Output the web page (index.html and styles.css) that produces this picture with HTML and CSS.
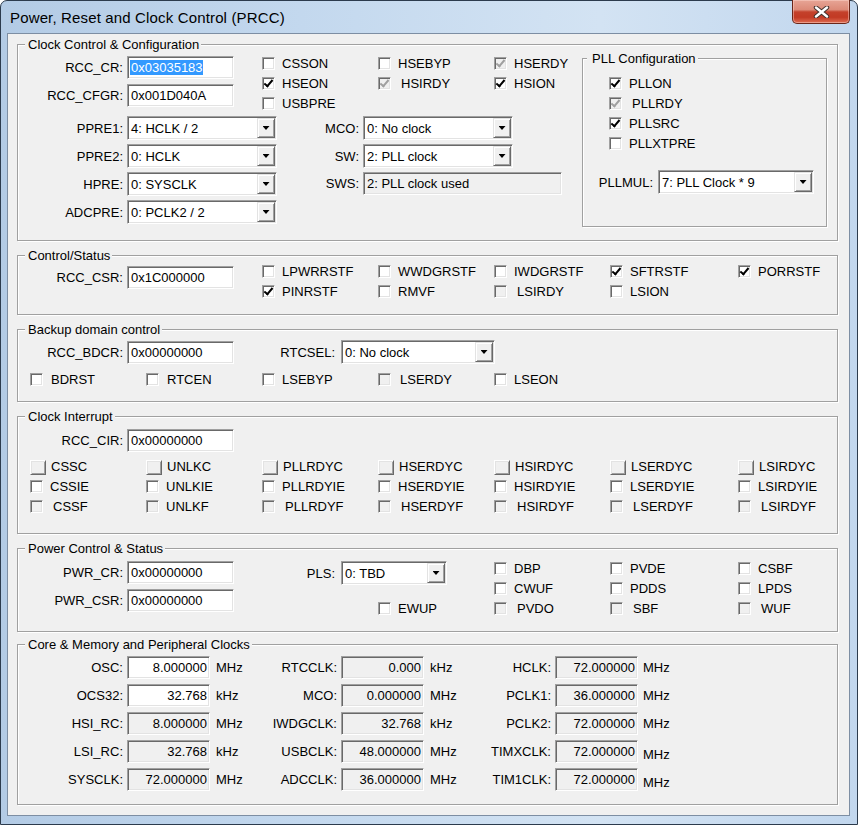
FILE: index.html
```html
<!DOCTYPE html>
<html>
<head>
<meta charset="utf-8">
<title>Power, Reset and Clock Control (PRCC)</title>
<link rel="stylesheet" href="styles.css">
</head>
<body>
<div class="window">
  <div class="titlebar">
    <span class="title">Power, Reset and Clock Control (PRCC)</span>
    <div class="close">
      <svg width="17" height="12" viewBox="0 0 17 12"><path d="M3 1.5 L14 10.5 M14 1.5 L3 10.5" stroke="#40302c" stroke-width="4.4" stroke-linecap="round"/><path d="M3 1.5 L14 10.5 M14 1.5 L3 10.5" stroke="#fff" stroke-width="2.4" stroke-linecap="round"/></svg>
    </div>
  </div>
  <div class="client">

    <div class="grp g1">
      <span class="legend">Clock Control &amp; Configuration</span>
      <div class="g1-left">
        <div class="g1-top">
          <div class="stack">
            <div class="fld"><span class="lbl l105">RCC_CR:</span><span class="edit w107"><span class="sel">0x03035183</span></span></div>
            <div class="fld"><span class="lbl l105">RCC_CFGR:</span><span class="edit w107">0x001D040A</span></div>
          </div>
          <div class="cbgrid c3 g1-cbs">
            <div class="cb"><span class="box"></span>CSSON</div>
            <div class="cb"><span class="box"></span>HSEBYP</div>
            <div class="cb"><span class="box dis on"></span>HSERDY</div>
            <div class="cb"><span class="box on"></span>HSEON</div>
            <div class="cb"><span class="box dis on sh"></span>HSIRDY</div>
            <div class="cb"><span class="box on"></span>HSION</div>
            <div class="cb"><span class="box"></span>USBPRE</div>
          </div>
        </div>
        <div class="g1-bot">
          <div class="stack s4">
            <div class="fld"><span class="lbl l105">PPRE1:</span><span class="combo w150"><span class="txt">4: HCLK / 2</span><span class="btn"></span></span></div>
            <div class="fld"><span class="lbl l105">PPRE2:</span><span class="combo w150"><span class="txt">0: HCLK</span><span class="btn"></span></span></div>
            <div class="fld"><span class="lbl l105">HPRE:</span><span class="combo w150"><span class="txt">0: SYSCLK</span><span class="btn"></span></span></div>
            <div class="fld"><span class="lbl l105">ADCPRE:</span><span class="combo w150"><span class="txt">0: PCLK2 / 2</span><span class="btn"></span></span></div>
          </div>
          <div class="stack s4">
            <div class="fld"><span class="lbl l82">MCO:</span><span class="combo w150"><span class="txt">0: No clock</span><span class="btn"></span></span></div>
            <div class="fld"><span class="lbl l82">SW:</span><span class="combo w150"><span class="txt">2: PLL clock</span><span class="btn"></span></span></div>
            <div class="fld"><span class="lbl l82">SWS:</span><span class="edit ro w199">2: PLL clock used</span></div>
          </div>
        </div>
      </div>
      <div class="grp pll">
        <span class="legend lg-pll">PLL Configuration</span>
        <div class="cbgrid c1">
          <div class="cb"><span class="box on"></span>PLLON</div>
          <div class="cb"><span class="box dis on sh"></span>PLLRDY</div>
          <div class="cb"><span class="box on"></span>PLLSRC</div>
          <div class="cb"><span class="box"></span>PLLXTPRE</div>
        </div>
        <div class="fld pllmul"><span class="lbl l70 gap5">PLLMUL:</span><span class="combo w156"><span class="txt">7: PLL Clock * 9</span><span class="btn"></span></span></div>
      </div>
    </div>

    <div class="grp g2">
      <span class="legend">Control/Status</span>
      <div class="fld"><span class="lbl l105">RCC_CSR:</span><span class="edit w107">0x1C000000</span></div>
      <div class="cbgrid c5 g2-cbs">
        <div class="cb"><span class="box"></span>LPWRRSTF</div>
        <div class="cb"><span class="box"></span>WWDGRSTF</div>
        <div class="cb"><span class="box"></span>IWDGRSTF</div>
        <div class="cb"><span class="box on"></span>SFTRSTF</div>
        <div class="cb"><span class="box on"></span>PORRSTF</div>
        <div class="cb"><span class="box on"></span>PINRSTF</div>
        <div class="cb"><span class="box"></span>RMVF</div>
        <div class="cb"><span class="box dis sh"></span>LSIRDY</div>
        <div class="cb"><span class="box"></span>LSION</div>
      </div>
    </div>

    <div class="grp g3">
      <span class="legend">Backup domain control</span>
      <div class="row">
        <div class="fld"><span class="lbl l105">RCC_BDCR:</span><span class="edit w107">0x00000000</span></div>
        <div class="fld"><span class="lbl l101 gap6">RTCSEL:</span><span class="combo w154"><span class="txt">0: No clock</span><span class="btn"></span></span></div>
      </div>
      <div class="cbgrid c5b g3-cbs">
        <div class="cb"><span class="box m8"></span>BDRST</div>
        <div class="cb"><span class="box m8"></span>RTCEN</div>
        <div class="cb"><span class="box"></span>LSEBYP</div>
        <div class="cb"><span class="box dis sh2"></span>LSERDY</div>
        <div class="cb"><span class="box"></span>LSEON</div>
      </div>
    </div>

    <div class="grp g4">
      <span class="legend">Clock Interrupt</span>
      <div class="fld"><span class="lbl l105">RCC_CIR:</span><span class="edit w107">0x00000000</span></div>
      <div class="cbgrid c7 g4-cbs">
        <div class="cb"><span class="box up"></span>CSSC</div>
        <div class="cb"><span class="box up"></span>UNLKC</div>
        <div class="cb"><span class="box up"></span>PLLRDYC</div>
        <div class="cb"><span class="box up"></span>HSERDYC</div>
        <div class="cb"><span class="box up"></span>HSIRDYC</div>
        <div class="cb"><span class="box up"></span>LSERDYC</div>
        <div class="cb"><span class="box up"></span>LSIRDYC</div>
        <div class="cb"><span class="box"></span>CSSIE</div>
        <div class="cb"><span class="box"></span>UNLKIE</div>
        <div class="cb"><span class="box"></span>PLLRDYIE</div>
        <div class="cb"><span class="box"></span>HSERDYIE</div>
        <div class="cb"><span class="box"></span>HSIRDYIE</div>
        <div class="cb"><span class="box"></span>LSERDYIE</div>
        <div class="cb"><span class="box"></span>LSIRDYIE</div>
        <div class="cb"><span class="box dis sh"></span>CSSF</div>
        <div class="cb"><span class="box dis"></span>UNLKF</div>
        <div class="cb"><span class="box dis sh"></span>PLLRDYF</div>
        <div class="cb"><span class="box dis sh"></span>HSERDYF</div>
        <div class="cb"><span class="box dis sh"></span>HSIRDYF</div>
        <div class="cb"><span class="box dis sh"></span>LSERDYF</div>
        <div class="cb"><span class="box dis sh"></span>LSIRDYF</div>
      </div>
    </div>

    <div class="grp g5">
      <span class="legend">Power Control &amp; Status</span>
      <div class="stack">
        <div class="fld"><span class="lbl l105">PWR_CR:</span><span class="edit w107">0x00000000</span></div>
        <div class="fld"><span class="lbl l105">PWR_CSR:</span><span class="edit w107">0x00000000</span></div>
      </div>
      <div class="g5-mid">
        <div class="fld"><span class="lbl l101 gap6">PLS:</span><span class="combo w106"><span class="txt">0: TBD</span><span class="btn"></span></span></div>
        <div class="cb ewup"><span class="box"></span>EWUP</div>
      </div>
      <div class="cbgrid c3b g5-cbs">
        <div class="cb"><span class="box"></span>DBP</div>
        <div class="cb"><span class="box"></span>PVDE</div>
        <div class="cb"><span class="box"></span>CSBF</div>
        <div class="cb"><span class="box"></span>CWUF</div>
        <div class="cb"><span class="box"></span>PDDS</div>
        <div class="cb"><span class="box"></span>LPDS</div>
        <div class="cb"><span class="box dis sh"></span>PVDO</div>
        <div class="cb"><span class="box dis sh"></span>SBF</div>
        <div class="cb"><span class="box dis sh"></span>WUF</div>
      </div>
    </div>

    <div class="grp g6">
      <span class="legend">Core &amp; Memory and Peripheral Clocks</span>
      <div class="stack clk1">
        <div class="fld"><span class="lbl l105">OSC:</span><span class="edit num w83">8.000000</span><span class="unit">MHz</span></div>
        <div class="fld"><span class="lbl l105">OCS32:</span><span class="edit num w83">32.768</span><span class="unit">kHz</span></div>
        <div class="fld"><span class="lbl l105">HSI_RC:</span><span class="edit num ro w83">8.000000</span><span class="unit">MHz</span></div>
        <div class="fld"><span class="lbl l105">LSI_RC:</span><span class="edit num ro w83">32.768</span><span class="unit">kHz</span></div>
        <div class="fld"><span class="lbl l105">SYSCLK:</span><span class="edit num ro w83">72.000000</span><span class="unit">MHz</span></div>
      </div>
      <div class="stack clk2">
        <div class="fld"><span class="lbl l87">RTCCLK:</span><span class="edit num ro w83">0.000</span><span class="unit">kHz</span></div>
        <div class="fld"><span class="lbl l87">MCO:</span><span class="edit num ro w83">0.000000</span><span class="unit">MHz</span></div>
        <div class="fld"><span class="lbl l87">IWDGCLK:</span><span class="edit num ro w83">32.768</span><span class="unit">kHz</span></div>
        <div class="fld"><span class="lbl l87">USBCLK:</span><span class="edit num ro w83">48.000000</span><span class="unit">MHz</span></div>
        <div class="fld"><span class="lbl l87">ADCCLK:</span><span class="edit num ro w83">36.000000</span><span class="unit">MHz</span></div>
      </div>
      <div class="stack clk3">
        <div class="fld"><span class="lbl l87">HCLK:</span><span class="edit num ro w83">72.000000</span><span class="unit u5">MHz</span></div>
        <div class="fld"><span class="lbl l87">PCLK1:</span><span class="edit num ro w83">36.000000</span><span class="unit u5">MHz</span></div>
        <div class="fld"><span class="lbl l87">PCLK2:</span><span class="edit num ro w83">72.000000</span><span class="unit u5">MHz</span></div>
        <div class="fld"><span class="lbl l87">TIMXCLK:</span><span class="edit num ro w83">72.000000</span><span class="unit u5 low">MHz</span></div>
        <div class="fld"><span class="lbl l87">TIM1CLK:</span><span class="edit num ro w83">72.000000</span><span class="unit u5 low">MHz</span></div>
      </div>
    </div>

  </div>
</div>
</body>
</html>
```
FILE: styles.css
```css
* { box-sizing: border-box; }
html, body { margin: 0; padding: 0; }
body {
  width: 858px; height: 825px; overflow: hidden; background: #fff;
  font-family: "Liberation Sans", Arial, sans-serif; font-size: 13px; line-height: 15px; color: #000;
}
.window {
  width: 858px; height: 825px;
  display: flex; flex-direction: column;
  padding: 0 7px 8px 6px;
  border: 1px solid #2c3b4d; border-radius: 7px 7px 0 0;
  background: linear-gradient(90deg, #b3cbe5 0%, #c3d8ee 35%, #d3e3f3 70%, #c2d7ee 100%);
}
.titlebar { height: 32px; flex: none; display: flex; align-items: flex-start; padding-left: 3px; }
.title { font-size: 15px; line-height: 18px; margin-top: 8px; letter-spacing: 0.15px; white-space: nowrap; }
.close {
  margin-left: auto; margin-top: -1px; width: 58px; height: 24px;
  border: 1px solid #6a2619; border-top: none; border-radius: 0 0 5px 5px;
  background: linear-gradient(#e7a596 0%, #dc8a78 42%, #c4412b 52%, #c23a24 75%, #de6c52 100%);
  box-shadow: inset 0 0 0 1px rgba(255, 220, 210, 0.45);
  display: flex; align-items: center; justify-content: center;
}
.client {
  flex: 1; background: #f0f0f0; border: 1px solid #7d8ea3;
  display: flex; flex-direction: column; gap: 14px;
  padding: 10px 11px 0 9px;
}

/* group boxes */
.grp {
  position: relative; flex: none;
  border: 1px solid #a0a0a0;
  box-shadow: inset 1px 1px 0 #fff, 1px 1px 0 #fff;
}
.legend {
  position: absolute; left: 7px; top: -8px;
  padding: 0 2px 0 3px; background: #f0f0f0; white-space: nowrap;
}
.g1 { height: 197px; display: flex; align-items: flex-start; padding-top: 11px; }
.g2 { height: 60px; display: flex; align-items: flex-start; padding-top: 10px; }
.g3 { height: 73px; padding-top: 10px; }
.g4 { height: 118px; padding-top: 12px; }
.g5 { height: 84px; display: flex; align-items: flex-start; padding-top: 12px; }
.g6 { height: 161px; display: flex; align-items: flex-start; padding-top: 11px; margin-top: -2px; }

.g1-left { width: 564px; flex: none; }
.g1-top { display: flex; height: 60px; }
.g1-cbs { margin-left: 28px; margin-top: 1px; }
.g1-bot { display: flex; }
.pll { width: 245px; height: 169px; margin-top: 2px; padding: 18px 0 0 26px; }
.lg-pll { left: 4px; padding-left: 5px; }
.pllmul { margin-left: -26px; margin-top: 13px; }

.g2-cbs { margin-left: 28px; margin-top: -1px; }
.row { display: flex; }
.g3-cbs { margin-left: 12px; margin-top: 9px; }
.g4-cbs { margin-left: 12px; margin-top: 8px; }
.g5-mid { width: 260px; flex: none; }
.ewup { margin-left: 144px; margin-top: 17px; }
.g5-cbs { margin-top: 1px; }
.clk1 { width: 232px; }
.clk2 { width: 214px; }

.stack { display: flex; flex-direction: column; gap: 5px; flex: none; }
.stack.s4 { gap: 4px; }

/* fields */
.fld { display: flex; align-items: center; flex: none; }
.lbl { flex: none; text-align: right; margin-right: 4px; white-space: nowrap; }
.gap5 { margin-right: 5px; }
.gap6 { margin-right: 6px; }
.l105 { width: 105px; }
.l101 { width: 101px; }
.l87 { width: 87px; }
.l82 { width: 82px; }
.l70 { width: 70px; }
.unit { margin-left: 6px; white-space: nowrap; }
.unit.u5 { margin-left: 5px; }
.unit.low { position: relative; top: 3px; }

.edit {
  flex: none; height: 23px; display: flex; align-items: center;
  padding: 0 3px; background: #fff; white-space: nowrap; overflow: hidden;
  border: 1px solid; border-color: #a0a0a0 #fff #fff #a0a0a0;
  box-shadow: inset 1px 1px 0 #696969, inset -1px -1px 0 #e3e3e3;
}
.edit.ro { background: #f0f0f0; }
.edit.num { justify-content: flex-end; padding-right: 2px; }
.sel { background: #3399ff; color: #fff; margin-left: -1px; padding-left: 1px; }
.w107 { width: 107px; }
.w199 { width: 199px; }
.w83 { width: 83px; }
.w150 { width: 150px; }
.w154 { width: 154px; }
.w156 { width: 156px; }
.w106 { width: 106px; }

.combo {
  flex: none; height: 24px; display: flex; align-items: center;
  padding: 1px; background: #fff; white-space: nowrap;
  border: 1px solid; border-color: #a0a0a0 #fff #fff #a0a0a0;
  box-shadow: inset 1px 1px 0 #696969, inset -1px -1px 0 #e3e3e3;
}
.combo .txt { flex: 1; padding-left: 2px; overflow: hidden; }
.combo .btn {
  flex: none; width: 18px; height: 20px; background: #f0f0f0;
  border: 1px solid; border-color: #e3e3e3 #696969 #696969 #e3e3e3;
  box-shadow: inset 1px 1px 0 #fff, inset -1px -1px 0 #a0a0a0;
  display: flex; align-items: center; justify-content: center;
}
.combo .btn::after {
  content: ""; width: 7px; height: 4px; background: #000;
  clip-path: polygon(0 0, 100% 0, 50% 100%);
}

/* checkboxes */
.cbgrid { display: grid; grid-auto-rows: 20px; align-items: start; flex: none; }
.c1 { grid-template-columns: auto; }
.c3 { grid-template-columns: 116px 116px auto; }
.c3b { grid-template-columns: 116px 128px auto; }
.c5 { grid-template-columns: 116px 116px 116px 128px auto; }
.c5b { grid-template-columns: 116px 116px 116px 116px auto; }
.c7 { grid-template-columns: 116px 116px 116px 116px 116px 128px auto; }
.cb { display: flex; align-items: center; height: 13px; white-space: nowrap; }
.box {
  position: relative; flex: none; width: 13px; height: 13px; margin-right: 7px;
  background: #fff;
  border: 1px solid; border-color: #a0a0a0 #fff #fff #a0a0a0;
  box-shadow: inset 1px 1px 0 #696969, inset -1px -1px 0 #e3e3e3;
}
.box.m8 { margin-right: 8px; }
.box.dis { background: #f0f0f0; }
.box.sh { margin-right: 10px; }
.box.sh2 { margin-right: 9px; }
.box.on::after {
  content: ""; position: absolute; left: 3px; top: 0px; width: 3px; height: 7px;
  border: solid #000; border-width: 0 2px 2px 0; transform: rotate(40deg);
}
.box.dis.on::after { border-color: #a0a0a0; }
.box.up {
  width: 16px; height: 15px; margin-right: 5px; margin-top: 1px;
  background: #f0f0f0;
  border-color: #fff #696969 #696969 #fff;
  box-shadow: inset 1px 1px 0 #e3e3e3, inset -1px -1px 0 #a0a0a0;
}
```
